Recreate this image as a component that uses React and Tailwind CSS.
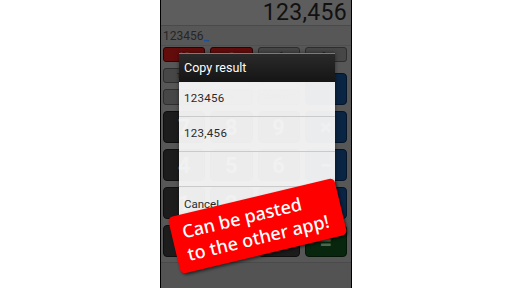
import React from 'react';

const font = { fontFamily: 'Roboto, "Noto Sans", sans-serif' };

// keys are drawn already dimmed, as they sit behind the dialog overlay
const RedKey = ({ label }) => (
  <div className="rounded-[3px] border border-[#2a0505] bg-[#630c0c] flex items-center justify-center text-[8px] font-bold text-[#7a3030]">
    {label}
  </div>
);

const GrayKey = ({ label }) => (
  <div className="rounded-[3px] border border-[#2e2e2e] bg-[#474747] flex items-center justify-center text-[8px] font-bold text-[#262626]">
    {label}
  </div>
);

const DarkKey = ({ label }) => (
  <div className="rounded-[4px] border border-[#0e0e0e] bg-[#1c1c1c] flex items-center justify-center text-[22px] font-bold text-[#6e6e6e]">
    {label}
  </div>
);

const BlueKey = ({ label, className = '' }) => (
  <div className={'rounded-[4px] border border-[#04152a] bg-[#0a2443] flex items-center justify-center text-[22px] font-bold text-[#5a6a80] ' + className}>
    {label}
  </div>
);

const GreenKey = ({ label }) => (
  <div className="rounded-[4px] border border-[#031505] bg-[#08260e] flex items-center justify-center text-[22px] font-bold text-[#4a6a50]">
    {label}
  </div>
);

const items = ['123456', '123,456', ''];

export default function App() {
  return (
    <div className="w-[512px] h-[288px] bg-white overflow-hidden relative" style={font}>
      <div className="ml-[160px] w-[192px] h-[288px] border-x border-black bg-[#575757] flex flex-col relative">
        {/* result display */}
        <div className="h-[26px] bg-[#5d5d5d] border-b border-[#4a4a4a] flex items-center justify-end pr-[4px] overflow-hidden">
          <span className="text-[23px] leading-[24px] text-[#111] tracking-[0.3px]">123,456</span>
        </div>
        {/* input line */}
        <div className="h-[20px] border-b border-[#4f4f4f] flex items-center pl-[2px] text-[12px] text-[#262626]">
          123456<span className="text-[#1c4f9c] font-bold">_</span>
        </div>

        {/* keypad */}
        <div className="grid grid-cols-4 grid-rows-[15px_15px_16px_32px_32px_32px_32px] gap-x-[5px] gap-y-[6px] pl-[2px] pr-[4px] pt-[1px]">
          <RedKey label="AC" />
          <RedKey label="C" />
          <GrayKey label="◀" />
          <GrayKey label="▶" />

          <GrayKey label="TAX" />
          <GrayKey label="" />
          <GrayKey label="" />
          <BlueKey className="row-span-2 mt-[5px]" />

          <GrayKey label="" />
          <GrayKey label="%" />
          <GrayKey label="CONVERT" />

          <DarkKey label="7" />
          <DarkKey label="8" />
          <DarkKey label="9" />
          <BlueKey label="×" />

          <DarkKey label="4" />
          <DarkKey label="5" />
          <DarkKey label="6" />
          <BlueKey label="−" />

          <DarkKey label="1" />
          <DarkKey label="2" />
          <DarkKey label="3" />
          <BlueKey label="+" />

          <DarkKey label="0" />
          <DarkKey label="00" />
          <DarkKey label="." />
          <GreenKey label="=" />
        </div>
        <div className="flex-1 mt-[5px] border-t border-[#4a4a4a] bg-[#535353]" />

        {/* copy dialog */}
        <div className="absolute left-[18px] top-[53px] w-[156px] shadow-[0_0_4px_rgba(0,0,0,0.5)]">
          <div className="h-[29px] bg-gradient-to-b from-[#2a2a2a] to-[#151515] border-t border-[#7a7a7a] flex items-center pl-[5px] text-[12.5px] text-white">
            Copy result
          </div>
          <div className="bg-[#f8f8f8]/95">
            {items.map((t, i) => (
              <div
                key={i}
                className="h-[35px] border-b border-[#cacaca] flex items-center pl-[5px] text-[11.5px] text-[#2a2a2a] tracking-[0.3px]"
              >
                {t}
              </div>
            ))}
            <div className="h-[36px] flex items-center pl-[5px] text-[11.5px] text-[#2a2a2a]">Cancel</div>
          </div>
        </div>
      </div>

      {/* promo banner */}
      <div
        className="absolute left-[172px] top-[197px] w-[171px] h-[58px] bg-[#ff0000] rounded-[5px] rotate-[-13.5deg] shadow-[1px_2px_3px_rgba(0,0,0,0.55)] flex flex-col justify-center pl-[11px] text-white text-[18px] leading-[23px] font-medium"
        style={{ fontFamily: '"Noto Sans", sans-serif' }}
      >
        <span>Can be pasted</span>
        <span>to the other app!</span>
      </div>
    </div>
  );
}
